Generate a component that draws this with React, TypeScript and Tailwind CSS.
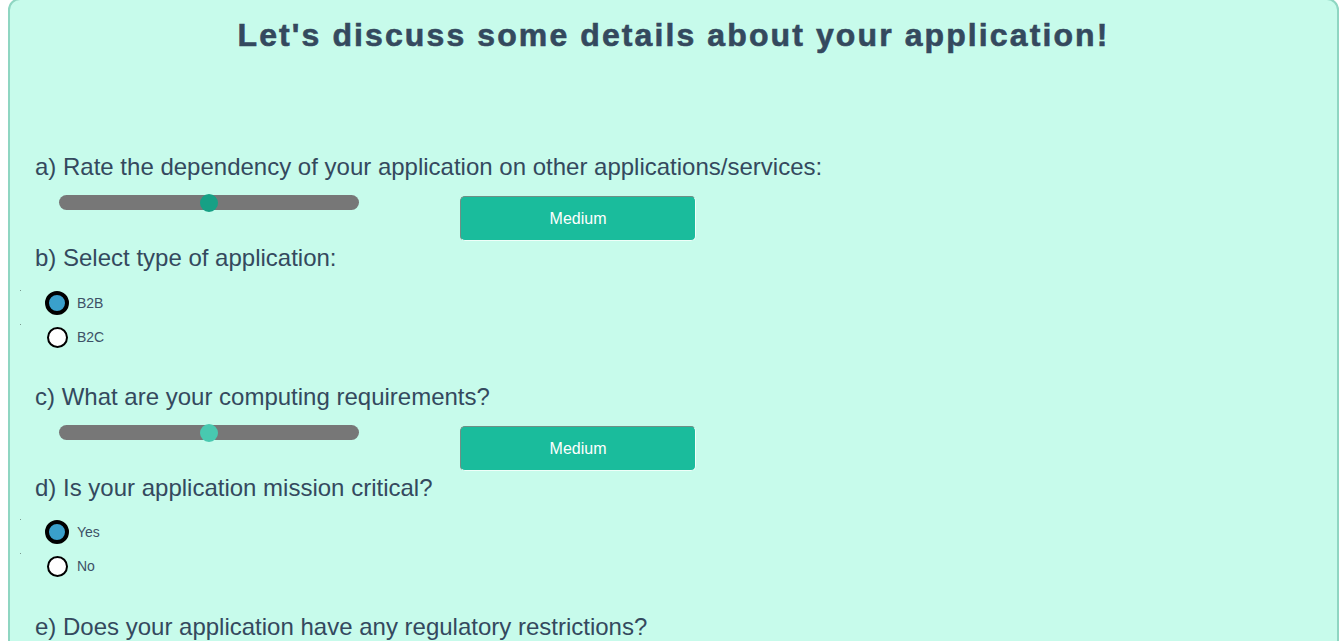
import { useState } from 'react';

const levels = ['Low', 'Medium', 'High'];

function Slider({ value, thumb }: { value: number; thumb: string }) {
  return (
    <div className="ml-6 mt-[-1px] w-[300px] h-[15px] rounded-full bg-[#777777] relative">
      <div
        className={`absolute top-1/2 w-[18px] h-[18px] rounded-full -translate-x-1/2 -translate-y-1/2 ${thumb}`}
        style={{ left: `${(value / (levels.length - 1)) * 100}%` }}
      />
    </div>
  );
}

function SliderRow({ thumb }: { thumb: string }) {
  const [value] = useState(1);
  return (
    <div className="flex items-start mt-[15px] h-[45px]">
      <Slider value={value} thumb={thumb} />
      <button className="ml-[101px] w-[236px] h-[45px] rounded-[5px] border border-t-[#6f8f86] border-l-[#6f8f86] border-r-[#effff9] border-b-[#effff9] bg-[#1abc9c] text-white text-[16px]">
        {levels[value]}
      </button>
    </div>
  );
}

function Radio({ label, checked }: { label: string; checked?: boolean }) {
  return (
    <div className="flex items-start h-[34px]">
      <span className="w-px h-px bg-[#7a9a90] ml-[-15px] mt-[-1px]" />
      <div className="flex items-center ml-[25px] mt-[-1px] h-[26px]">
        <span className="w-[22px] flex justify-center items-center">
          {checked ? (
            <span className="shrink-0 w-[24px] h-[24px] rounded-full border-4 border-black bg-[#3aa0cb]" />
          ) : (
            <span className="shrink-0 w-[21px] h-[21px] rounded-full border-2 border-black bg-white" />
          )}
        </span>
        <span className="ml-[9px] text-[14px] text-[#3d5166]">{label}</span>
      </div>
    </div>
  );
}

function Question({ children, className = '' }: { children: React.ReactNode; className?: string }) {
  return <p className={`text-[24px] leading-[28px] text-[#34495e] ${className}`}>{children}</p>;
}

export default function App() {
  return (
    <div className="min-h-screen bg-white font-['Liberation_Sans',Arial,sans-serif] overflow-hidden">
      <div className="ml-2 mr-1 mt-[-2px] h-[660px] rounded-t-xl border-2 border-[#8fd6c2] bg-[#c7fbeb] px-[25px]">
        <h1 className="mt-[15px] text-center text-[32px] leading-[40px] font-bold tracking-[2.1px] text-[#34495e] [-webkit-text-stroke:0.6px_#34495e]">
          Let's discuss some details about your application!
        </h1>

        <Question className="mt-[98px]">
          a) Rate the dependency of your application on other applications/services:
        </Question>
        <SliderRow thumb="bg-[#16a085]" />

        <Question className="mt-[3px]">b) Select type of application:</Question>
        <div className="mt-[19px]">
          <Radio label="B2B" checked />
          <Radio label="B2C" />
        </div>

        <Question className="mt-[24px]">c) What are your computing requirements?</Question>
        <SliderRow thumb="bg-[#48c9b0]" />

        <Question className="mt-[3px]">d) Is your application mission critical?</Question>
        <div className="mt-[18px]">
          <Radio label="Yes" checked />
          <Radio label="No" />
        </div>

        <Question className="mt-[25px]">e) Does your application have any regulatory restrictions?</Question>
      </div>
    </div>
  );
}
